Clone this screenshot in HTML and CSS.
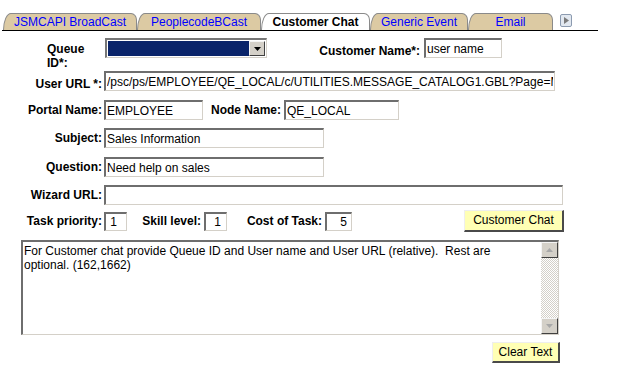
FILE: index.html
```html
<!DOCTYPE html>
<html>
<head>
<meta charset="utf-8">
<title>Customer Chat</title>
<link rel="stylesheet" href="styles.css">
</head>
<body>
<div class="tabs">
  <div class="tab t1">JSMCAPI BroadCast</div>
  <div class="tab t2">PeoplecodeBCast</div>
  <div class="tab t3 active">Customer Chat</div>
  <div class="tab t4">Generic Event</div>
  <div class="tab t5">Email</div>
  <div class="tab-next">
    <svg width="12" height="13" viewBox="0 0 12 13"><rect x="0.5" y="0.5" width="11" height="12" rx="1.5" fill="#e2e8f0" stroke="#8c9bb0"/><path d="M4 3 L9 6.5 L4 10 Z" fill="#7c7c7c"/></svg>
  </div>
</div>

<div class="form">
  <div class="row r1">
    <div class="q-lbl">Queue ID*:</div>
    <div class="select">
      <div class="sel-val"></div>
      <div class="sel-btn"><svg width="7" height="4" viewBox="0 0 7 4"><path d="M0 0 H7 L3.5 4 Z" fill="#000"/></svg></div>
    </div>
    <div class="lbl cn-lbl bottom">Customer Name*:</div>
    <input class="inp w-cn cn-inp" value="user name">
  </div>

  <div class="row r2">
    <div class="lbl bottom">User URL *:</div>
    <input class="inp w-url" value="/psc/ps/EMPLOYEE/QE_LOCAL/c/UTILITIES.MESSAGE_CATALOG1.GBL?Page=MESSAGE_CATALOG">
  </div>

  <div class="row r3">
    <div class="lbl">Portal Name:</div>
    <input class="inp w-portal" value="EMPLOYEE">
    <div class="lbl node-lbl">Node Name:</div>
    <input class="inp w-node" value="QE_LOCAL">
  </div>

  <div class="row r4">
    <div class="lbl">Subject:</div>
    <input class="inp w-subj" value="Sales Information">
  </div>

  <div class="row r5">
    <div class="lbl">Question:</div>
    <input class="inp w-subj" value="Need help on sales">
  </div>

  <div class="row r6">
    <div class="lbl">Wizard URL:</div>
    <input class="inp w-wiz" value="">
  </div>

  <div class="row r7">
    <div class="lbl">Task priority:</div>
    <input class="inp num w-task" value="1">
    <div class="lbl skill-lbl">Skill level:</div>
    <input class="inp num w-skill" value="1">
    <div class="lbl cost-lbl">Cost of Task:</div>
    <input class="inp num w-cost" value="5">
    <div class="btn btn-chat">Customer Chat</div>
  </div>

  <div class="ta">
    <div class="ta-text">For Customer chat provide Queue ID and User name and User URL (relative).  Rest are optional. (162,1662)</div>
    <div class="sb">
      <div class="sb-btn"><svg width="7" height="4" viewBox="0 0 7 4"><path d="M3.5 0 L7 4 H0 Z" fill="#a8a8a8"/></svg></div>
      <div class="sb-track"></div>
      <div class="sb-btn"><svg width="7" height="4" viewBox="0 0 7 4"><path d="M0 0 H7 L3.5 4 Z" fill="#a8a8a8"/></svg></div>
    </div>
  </div>

  <div class="btn btn-clear">Clear Text</div>
</div>
</body>
</html>
```

FILE: styles.css
```css
html, body {
  margin: 0;
  padding: 0;
  background: #fff;
}
body {
  font-family: "Liberation Sans", Arial, sans-serif;
  font-size: 12px;
  color: #000;
}

/* ---------- tabs ---------- */
.tabs {
  display: flex;
  align-items: flex-end;
  margin: 13px 0 0 2px;
  padding-left: 1px;
  width: 595px;
  height: 17px;
  border-bottom: 1px solid #000;
}
.tab {
  box-sizing: border-box;
  height: 17px;
  border: 1px solid #8a8a8a;
  border-bottom: 0;
  border-radius: 8px 6px 0 0 / 17px 7px 0 0;
  background: #dccaa3;
  color: #0000ff;
  font-size: 12px;
  line-height: 16px;
  text-align: center;
  white-space: nowrap;
}
.tab.active {
  background: #fff;
  color: #000;
  font-weight: bold;
}
.t1 { width: 134px; }
.t2 { width: 124px; }
.t3 { width: 109px; }
.t4 { width: 98px; }
.t5 { width: 85px; }
.tab-next {
  width: 12px;
  height: 13px;
  margin: 0 0 3px 7px;
}
.tab-next svg { display: block; }

/* ---------- form ---------- */
.form {
  margin-top: 7px;
}
.row {
  display: flex;
  align-items: center;
  height: 20px;
}
.r2 { margin-top: 13px; }
.r3 { margin-top: 9px; }
.r4 { margin-top: 8px; }
.r5 { margin-top: 9px; }
.r6 { margin-top: 8px; }
.r7 { margin-top: 5px; height: 22px; }

.lbl {
  box-sizing: border-box;
  flex: none;
  width: 104px;
  padding-right: 2px;
  text-align: right;
  font-weight: bold;
  line-height: 14px;
  white-space: nowrap;
}
.lbl.bottom { align-self: flex-end; }

.q-lbl {
  flex: none;
  box-sizing: border-box;
  width: 58px;
  margin-left: 47px;
  padding-right: 14px;
  align-self: flex-start;
  padding-top: 4px;
  font-weight: bold;
  line-height: 14px;
}

.select {
  flex: none;
  box-sizing: border-box;
  display: flex;
  width: 162px;
  height: 20px;
  border-top: 2px solid #777;
  border-left: 2px solid #777;
  border-right: 1px solid #d4d0c8;
  border-bottom: 1px solid #d4d0c8;
  background: #fff;
  padding: 1px;
}
.sel-val {
  flex: 1;
  background: #0a246a;
}
.sel-btn {
  box-sizing: border-box;
  width: 16px;
  background: #d4d0c8;
  border-top: 1px solid #f4f4f4;
  border-left: 1px solid #f4f4f4;
  border-right: 1px solid #404040;
  border-bottom: 1px solid #404040;
  display: flex;
  align-items: center;
  justify-content: center;
}
.sel-btn svg { display: block; }

.cn-lbl {
  width: 157px;
  padding-right: 4px;
}
.cn-inp { align-self: flex-start; margin-top: 1px; }

.inp {
  flex: none;
  box-sizing: border-box;
  height: 20px;
  margin: 0;
  padding: 0 1px;
  border-top: 2px solid #6e6e6e;
  border-left: 2px solid #6e6e6e;
  border-right: 1px solid #d4d0c8;
  border-bottom: 1px solid #d4d0c8;
  border-radius: 0;
  background: #fff;
  font-family: "Liberation Sans", Arial, sans-serif;
  font-size: 12px;
  color: #000;
  outline: none;
}
.num { text-align: right; height: 19px; }
.w-cn { width: 78px; }
.w-url { width: 451px; }
.w-portal { width: 99px; }
.w-node { width: 115px; }
.w-subj { width: 220px; }
.w-wiz { width: 459px; }
.w-task { width: 23px; padding-right: 9px; }
.w-skill { width: 23px; padding-right: 5px; }
.w-cost { width: 27px; padding-right: 4px; }

.node-lbl { width: 81px; padding-right: 3px; }
.skill-lbl { width: 77px; padding-right: 3px; }
.cost-lbl { width: 98px; padding-right: 3px; }

.btn {
  box-sizing: border-box;
  flex: none;
  height: 22px;
  background: #ffffb4;
  border-top: 1px solid #eeeeee;
  border-left: 1px solid #eeeeee;
  border-right: 2px solid #4a4a4a;
  border-bottom: 2px solid #4a4a4a;
  line-height: 19px;
  text-align: center;
  white-space: nowrap;
}
.btn-chat {
  width: 100px;
  margin-left: 112px;
}
.btn-clear {
  width: 68px;
  height: 21px;
  line-height: 18px;
  margin: 7px 0 0 492px;
}

/* ---------- textarea ---------- */
.ta {
  box-sizing: border-box;
  display: flex;
  width: 538px;
  height: 95px;
  margin: 8px 0 0 21px;
  border-top: 2px solid #6e6e6e;
  border-left: 2px solid #6e6e6e;
  border-right: 1px solid #d4d0c8;
  border-bottom: 1px solid #d4d0c8;
  background: #fff;
}
.ta-text {
  flex: 1;
  padding: 2px 4px 0 1px;
  line-height: 14px;
  white-space: pre-wrap;
  overflow: hidden;
}
.sb {
  flex: none;
  width: 17px;
  display: flex;
  flex-direction: column;
}
.sb-btn {
  box-sizing: border-box;
  height: 16px;
  background: #d4d0c8;
  border-top: 1px solid #f4f4f4;
  border-left: 1px solid #f4f4f4;
  border-right: 1px solid #404040;
  border-bottom: 1px solid #404040;
  display: flex;
  align-items: center;
  justify-content: center;
}
.sb-btn svg { display: block; }
.sb-track {
  flex: 1;
  background-color: #fff;
  background-image: repeating-conic-gradient(#d4d0c8 0 25%, #ffffff 0 50%);
  background-size: 2px 2px;
}
```
